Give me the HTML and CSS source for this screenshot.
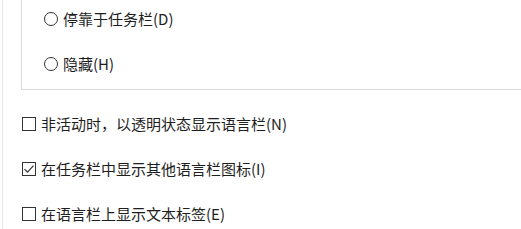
FILE: index.html
```html
<!DOCTYPE html>
<html>
<head>
    <meta charset="UTF-8">
    <title>语言栏选项</title>
    <link rel="stylesheet" href="styles.css">
</head>
<body>
<div class="panel">
    <div class="group-box">
        <label class="option">
            <span class="radio"></span>
            <span>停靠于任务栏(D)</span>
        </label>
        <label class="option">
            <span class="radio"></span>
            <span>隐藏(H)</span>
        </label>
    </div>

    <div class="checks">
        <label class="option">
            <span class="checkbox"></span>
            <span>非活动时，以透明状态显示语言栏(N)</span>
        </label>
        <label class="option">
            <span class="checkbox">
                <svg width="12" height="12" viewBox="0 0 12 12">
                    <polyline points="1.5,6.2 4.5,9.2 10.5,2.6" fill="none" stroke="#333" stroke-width="1.2"/>
                </svg>
            </span>
            <span>在任务栏中显示其他语言栏图标(I)</span>
        </label>
        <label class="option">
            <span class="checkbox"></span>
            <span>在语言栏上显示文本标签(E)</span>
        </label>
    </div>
</div>
</body>
</html>
```

FILE: styles.css
```css
body {
    margin: 0;
    background: #fff;
    font-family: "Noto Sans CJK SC", "Noto Sans", sans-serif;
    font-size: 15px;
    color: #1e1e1e;
    overflow: hidden;
}

.panel {
    margin-left: 2px;
    border-left: 1px solid #e6e6e6;
    height: 229px;
}

.group-box {
    margin-left: 18px;
    border-left: 1px solid #dcdcdc;
    border-bottom: 1px solid #dcdcdc;
    padding: 4px 0 10px 22px;
    display: flex;
    flex-direction: column;
    gap: 15px;
}

.checks {
    margin-top: 19px;
    padding-left: 19px;
    display: flex;
    flex-direction: column;
    gap: 15px;
}

.option {
    display: flex;
    align-items: center;
    gap: 5px;
    height: 30px;
    line-height: 20px;
}

.radio {
    width: 12px;
    height: 12px;
    border: 1px solid #333;
    border-radius: 50%;
    flex-shrink: 0;
}

.checkbox {
    width: 12px;
    height: 12px;
    border: 1px solid #333;
    flex-shrink: 0;
    display: flex;
    align-items: center;
    justify-content: center;
}
```
